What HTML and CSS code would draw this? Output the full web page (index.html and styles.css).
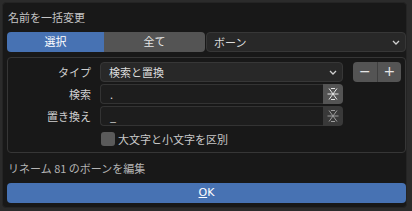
FILE: index.html
```html
<!DOCTYPE html>
<html lang="ja">

<head>
    <meta charset="UTF-8">
    <meta name="viewport" content="width=device-width, initial-scale=1.0">
    <title>名前を一括変更</title>
    <link rel="stylesheet" href="styles.css">
</head>

<body>
    <div class="dialog">
        <div class="title">名前を一括変更</div>

        <div class="topRow">
            <div class="seg segActive">選択</div>
            <div class="seg segRight">全て</div>
            <div class="select selectWide">
                <span>ボーン</span>
                <svg class="chev" width="8" height="5" viewBox="0 0 8 5"><path d="M1 1 L4 4 L7 1" fill="none" stroke="#cfcfcf" stroke-width="1.3"/></svg>
            </div>
        </div>

        <div class="box">
            <div class="row">
                <div class="label">タイプ</div>
                <div class="select selectType">
                    <span>検索と置換</span>
                    <svg class="chev" width="8" height="5" viewBox="0 0 8 5"><path d="M1 1 L4 4 L7 1" fill="none" stroke="#cfcfcf" stroke-width="1.3"/></svg>
                </div>
                <div class="pm">
                    <div class="pmBtn">−</div>
                    <div class="pmBtn">+</div>
                </div>
            </div>
            <div class="row">
                <div class="label">検索</div>
                <div class="field">.</div>
                <div class="iconBtn iconOn">
                    <svg width="14" height="14" viewBox="0 0 14 14"><path d="M3 1.5 L11 12.5 M11 1.5 L3 12.5 M1.5 7 L12.5 7 M5 1.5 L9 1.5 M5 12.5 L9 12.5" stroke="#e6e6e6" stroke-width="1" fill="none"/></svg>
                </div>
            </div>
            <div class="row">
                <div class="label">置き換え</div>
                <div class="field">_</div>
                <div class="iconBtn">
                    <svg width="14" height="14" viewBox="0 0 14 14"><path d="M3 1.5 L11 12.5 M11 1.5 L3 12.5 M1.5 7 L12.5 7 M5 1.5 L9 1.5 M5 12.5 L9 12.5" stroke="#9c9c9c" stroke-width="1" fill="none"/></svg>
                </div>
            </div>
            <div class="row checkRow">
                <div class="label"></div>
                <div class="check"></div>
                <span class="checkText">大文字と小文字を区別</span>
            </div>
        </div>

        <div class="info">リネーム 81 のボーンを編集</div>

        <div class="ok"><span class="under">O</span>K</div>
    </div>
</body>

</html>
```

FILE: styles.css
```css
* {
    box-sizing: border-box;
}

body {
    margin: 0;
    background-color: #2b2b2b;
    font-family: "Noto Sans CJK JP", "Noto Sans", sans-serif;
    font-size: 11px;
    color: #cfcfcf;
}

.dialog {
    margin: 2px 0 0 2px;
    width: 405px;
    height: 206px;
    padding: 0 0 0 4px;
    background-color: #181818;
    border: 1px solid #242424;
    border-radius: 4px;
    display: flex;
    flex-direction: column;
}

.title {
    height: 29px;
    line-height: 28px;
    padding-left: 1px;
    color: #c4c4c4;
}

.topRow {
    display: flex;
    height: 20px;
}

.seg {
    height: 20px;
    line-height: 19px;
    text-align: center;
    background-color: #545454;
    color: #e6e6e6;
}

.segActive {
    width: 97px;
    background-color: #4772b3;
    border-radius: 4px 0 0 4px;
    color: #ffffff;
}

.segRight {
    width: 101px;
    border-radius: 0 4px 4px 0;
}

.select {
    display: flex;
    align-items: center;
    justify-content: space-between;
    height: 20px;
    padding: 0 5px 0 8px;
    background-color: #282828;
    border: 1px solid #373737;
    border-radius: 4px;
    color: #dcdcdc;
}

.selectWide {
    flex: 1;
    margin-left: 1px;
    padding-left: 7px;
}

.box {
    margin-top: 5px;
    border: 1px solid #363636;
    border-radius: 4px;
    padding: 4px 4px 3px 0;
    display: flex;
    flex-direction: column;
    gap: 2px;
}

.row {
    display: flex;
    align-items: center;
    height: 20px;
}

.label {
    width: 84px;
    padding-right: 1px;
    margin-right: 8px;
    text-align: right;
    color: #cfcfcf;
}

.selectType {
    width: 243px;
}

.pm {
    display: flex;
    margin-left: 10px;
    width: 48px;
    height: 20px;
    border-radius: 4px;
    overflow: hidden;
    background-color: #545454;
}

.pmBtn {
    flex: 1;
    text-align: center;
    line-height: 19px;
    font-family: "DejaVu Sans", sans-serif;
    font-size: 14px;
    color: #e6e6e6;
}

.pmBtn + .pmBtn {
    border-left: 1px solid #3f3f3f;
}

.field {
    width: 223px;
    height: 20px;
    line-height: 19px;
    padding-left: 9px;
    background-color: #1d1d1d;
    border: 1px solid #333333;
    border-right: none;
    border-radius: 4px 0 0 4px;
    color: #dcdcdc;
}

.iconBtn {
    width: 20px;
    height: 20px;
    display: flex;
    align-items: center;
    justify-content: center;
    background-color: #393939;
    border-radius: 0 4px 4px 0;
}

.iconOn {
    background-color: #545454;
}

.checkRow {
    margin-top: 1px;
}

.check {
    width: 14px;
    height: 14px;
    margin-left: 1px;
    margin-right: 3px;
    background-color: #5a5a5a;
    border-radius: 3px;
}

.checkText {
    color: #c8c8c8;
}

.info {
    height: 30px;
    line-height: 30px;
    padding-left: 1px;
    color: #b4b4b4;
}

.ok {
    height: 20px;
    line-height: 19px;
    text-align: center;
    background-color: #4772b3;
    border-radius: 4px;
    color: #ffffff;
    font-family: "DejaVu Sans", sans-serif;
    font-size: 11px;
}

.under {
    text-decoration: underline;
}
```
